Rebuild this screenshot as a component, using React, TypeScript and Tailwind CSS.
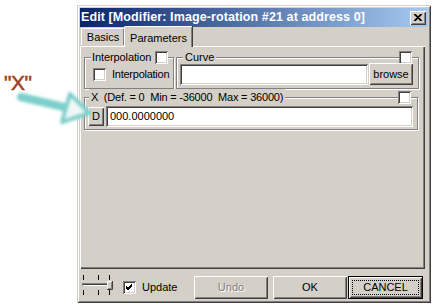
import React from "react";

const FONT = { fontFamily: '"Liberation Sans", Arial, sans-serif' };

const sunken =
  "shadow-[inset_1px_1px_0_#808080,inset_-1px_-1px_0_#fff,inset_2px_2px_0_#404040,inset_-2px_-2px_0_#d4d0c8]";
const raised =
  "shadow-[inset_1px_1px_0_#fff,inset_-1px_-1px_0_#404040,inset_2px_2px_0_#d4d0c8,inset_-2px_-2px_0_#808080]";
const etched = "border border-[#808080] shadow-[1px_1px_0_#fff,inset_1px_1px_0_#fff]";

const CheckBox = ({ checked = false }: { checked?: boolean }) => (
  <div className={`w-[13px] h-[13px] bg-white shrink-0 flex items-center justify-center ${sunken}`}>
    {checked && (
      <svg width="7" height="7" viewBox="0 0 7 7">
        <path d="M0 2 L2 4 L6 0 M0 3 L2 5 L6 1 M0 4 L2 6 L6 2" stroke="#000" strokeWidth="1" fill="none" />
      </svg>
    )}
  </div>
);

const Button = ({
  children,
  className = "",
  disabled = false,
}: {
  children: React.ReactNode;
  className?: string;
  disabled?: boolean;
}) => (
  <div className={`bg-[#d4d0c8] flex items-center justify-center ${raised} ${className}`}>
    <span className={disabled ? "text-[#808080] [text-shadow:1px_1px_0_#fff]" : "text-black"}>{children}</span>
  </div>
);

// little trackbar drawing in the lower left corner
const SliderIcon = () => (
  <svg width="34" height="26" viewBox="0 0 34 26">
    <g stroke="#000" strokeWidth="1">
      <line x1="3.5" y1="4" x2="3.5" y2="9" />
      <line x1="18.5" y1="4" x2="18.5" y2="9" />
      <line x1="29.5" y1="4" x2="29.5" y2="9" />
      <line x1="3.5" y1="19" x2="3.5" y2="24" />
      <line x1="18.5" y1="19" x2="18.5" y2="24" />
      <line x1="29.5" y1="19" x2="29.5" y2="24" />
    </g>
    <rect x="2" y="12" width="28" height="4" fill="#fff" />
    <line x1="2" y1="12.5" x2="30" y2="12.5" stroke="#808080" />
    <line x1="2.5" y1="12" x2="2.5" y2="16" stroke="#808080" />
    <line x1="3" y1="13.5" x2="30" y2="13.5" stroke="#404040" />
    <line x1="2" y1="15.5" x2="30" y2="15.5" stroke="#d4d0c8" />
    <rect x="27" y="10" width="5" height="9" fill="#d4d0c8" />
    <path d="M27.5 18.5 V10.5 H31.5" stroke="#fff" fill="none" />
    <path d="M27 18.5 H32.5 V10" stroke="#404040" fill="none" />
    <path d="M28 17.5 H31.5 V11" stroke="#808080" fill="none" />
  </svg>
);

export default function App() {
  return (
    <div className="relative w-[436px] h-[306px] bg-white overflow-hidden text-[11px] text-black" style={FONT}>
      {/* annotation */}
      <div className="absolute left-[4px] top-[67px] text-[21px] text-[#a0421e] tracking-[-0.5px] [-webkit-text-stroke:0.5px_#a0421e]">
        "X"
      </div>
      <svg className="absolute left-0 top-[60px] z-10" width="100" height="80" viewBox="0 0 100 80">
        <defs>
          <filter id="blur" x="-20%" y="-20%" width="140%" height="140%">
            <feGaussianBlur stdDeviation="1.6" />
          </filter>
        </defs>
        <g filter="url(#blur)">
          <line x1="21" y1="37" x2="68" y2="48" stroke="#7ccfcb" strokeWidth="8" strokeLinecap="round" />
          <polygon points="70,34 89,53 62,62" fill="#eef8f7" stroke="#7ccfcb" strokeWidth="4" strokeLinejoin="round" />
        </g>
      </svg>

      <div className="pl-[77px] pt-[5px]">
        <div className="w-[354px] h-[298px] bg-[#d4d0c8] p-[3px] flex flex-col shadow-[inset_1px_1px_0_#d4d0c8,inset_-1px_-1px_0_#404040,inset_2px_2px_0_#fff,inset_-2px_-2px_0_#808080]">
          {/* title bar */}
          <div className="h-[19px] shrink-0 bg-[linear-gradient(to_right,#0a246a,#a6caf0)] flex items-center justify-between pl-[1px] pr-[2px]">
            <span className="text-white font-bold text-[12.5px] tracking-[0.1px] whitespace-nowrap">
              Edit [Modifier: Image-rotation #21 at address 0]
            </span>
            <div className={`w-[16px] h-[14px] bg-[#d4d0c8] flex items-center justify-center ${raised}`}>
              <svg width="8" height="7" viewBox="0 0 8 7">
                <path d="M0 0 L7 7 M1 0 L8 7 M7 0 L0 7 M8 0 L1 7" stroke="#000" strokeWidth="1.1" />
              </svg>
            </div>
          </div>

          {/* tabs */}
          <div className="h-[19px] shrink-0 flex items-end pl-[1px]">
            <div className="h-[17px] w-[43px] border-t border-l border-white rounded-tl-[2px] shadow-[inset_-1px_0_0_#808080,1px_0_0_#404040] flex items-center justify-center mb-[1px]">
              Basics
            </div>
            <div className="relative z-10 -mb-[1px] h-[21px] w-[68px] bg-[#d4d0c8] border-t border-l border-white rounded-tl-[2px] shadow-[inset_-1px_0_0_#808080,1px_0_0_#404040] flex items-start pt-[3px] justify-center">
              Parameters
            </div>
          </div>

          {/* panel */}
          <div className="h-[223px] w-[345px] shrink-0 bg-[#d4d0c8] px-[4px] pt-[11px] shadow-[inset_1px_1px_0_#fff,inset_-1px_-1px_0_#404040,inset_-2px_-2px_0_#808080]">
            <div className="flex gap-[2px]">
              {/* Interpolation group */}
              <div className={`w-[90px] h-[32px] ${etched}`}>
                <div className="-mt-[7px] flex items-center h-[13px] pl-[6px]">
                  <span className="bg-[#d4d0c8] pl-[1px] pr-[4px] tracking-[-0.1px]">Interpolation</span>
                  <CheckBox />
                </div>
                <div className="flex items-center pl-[8px] mt-[2px] gap-[6px]">
                  <CheckBox />
                  <span className="tracking-[-0.25px]">Interpolation</span>
                </div>
              </div>
              {/* Curve group */}
              <div className={`w-[243px] h-[32px] ${etched}`}>
                <div className="-mt-[7px] flex items-center justify-between h-[13px] pl-[6px] pr-[6px]">
                  <span className="bg-[#d4d0c8] px-[2px]">Curve</span>
                  <CheckBox />
                </div>
                <div className="flex items-start pl-[3px] gap-[1px] -mt-[1px]">
                  <div className={`w-[188px] h-[21px] bg-white mt-[1px] ${sunken}`} />
                  <Button className="w-[44px] h-[22px]">browse</Button>
                </div>
              </div>
            </div>

            {/* X group */}
            <div className={`mt-[8px] w-[334px] h-[33px] ${etched}`}>
              <div className="-mt-[7px] flex items-center justify-between h-[13px] pl-[4px] pr-[6px]">
                <span className="bg-[#d4d0c8] px-[2px] whitespace-pre tracking-[-0.2px]">
                  X  (Def. = 0  Min = -36000  Max = 36000)
                </span>
                <CheckBox />
              </div>
              <div className="flex items-center pl-[3px] gap-[2px] mt-[2px]">
                <Button className="w-[16px] h-[19px]">D</Button>
                <div className={`w-[307px] h-[21px] bg-white flex items-center pl-[4px] ${sunken}`}>
                  000.0000000
                </div>
              </div>
            </div>
          </div>

          {/* bottom bar */}
          <div className="flex-1 flex items-start pt-[2px]">
            <SliderIcon />
            <div className="flex items-center gap-[6px] ml-[9px] mt-[8px]">
              <CheckBox checked />
              <span>Update</span>
            </div>
            <div className="ml-auto flex gap-[1px] mt-[5px] pr-[5px]">
              <Button className="w-[74px] h-[23px] mr-[4px]" disabled>
                Undo
              </Button>
              <Button className="w-[74px] h-[23px]">OK</Button>
              <div className="w-[75px] h-[23px] border border-black">
                <div className={`w-full h-full flex items-center justify-center p-[3px] ${raised}`}>
                  <div className="w-full h-full border border-dotted border-black flex items-center justify-center">
                    CANCEL
                  </div>
                </div>
              </div>
            </div>
          </div>
        </div>
      </div>
    </div>
  );
}
